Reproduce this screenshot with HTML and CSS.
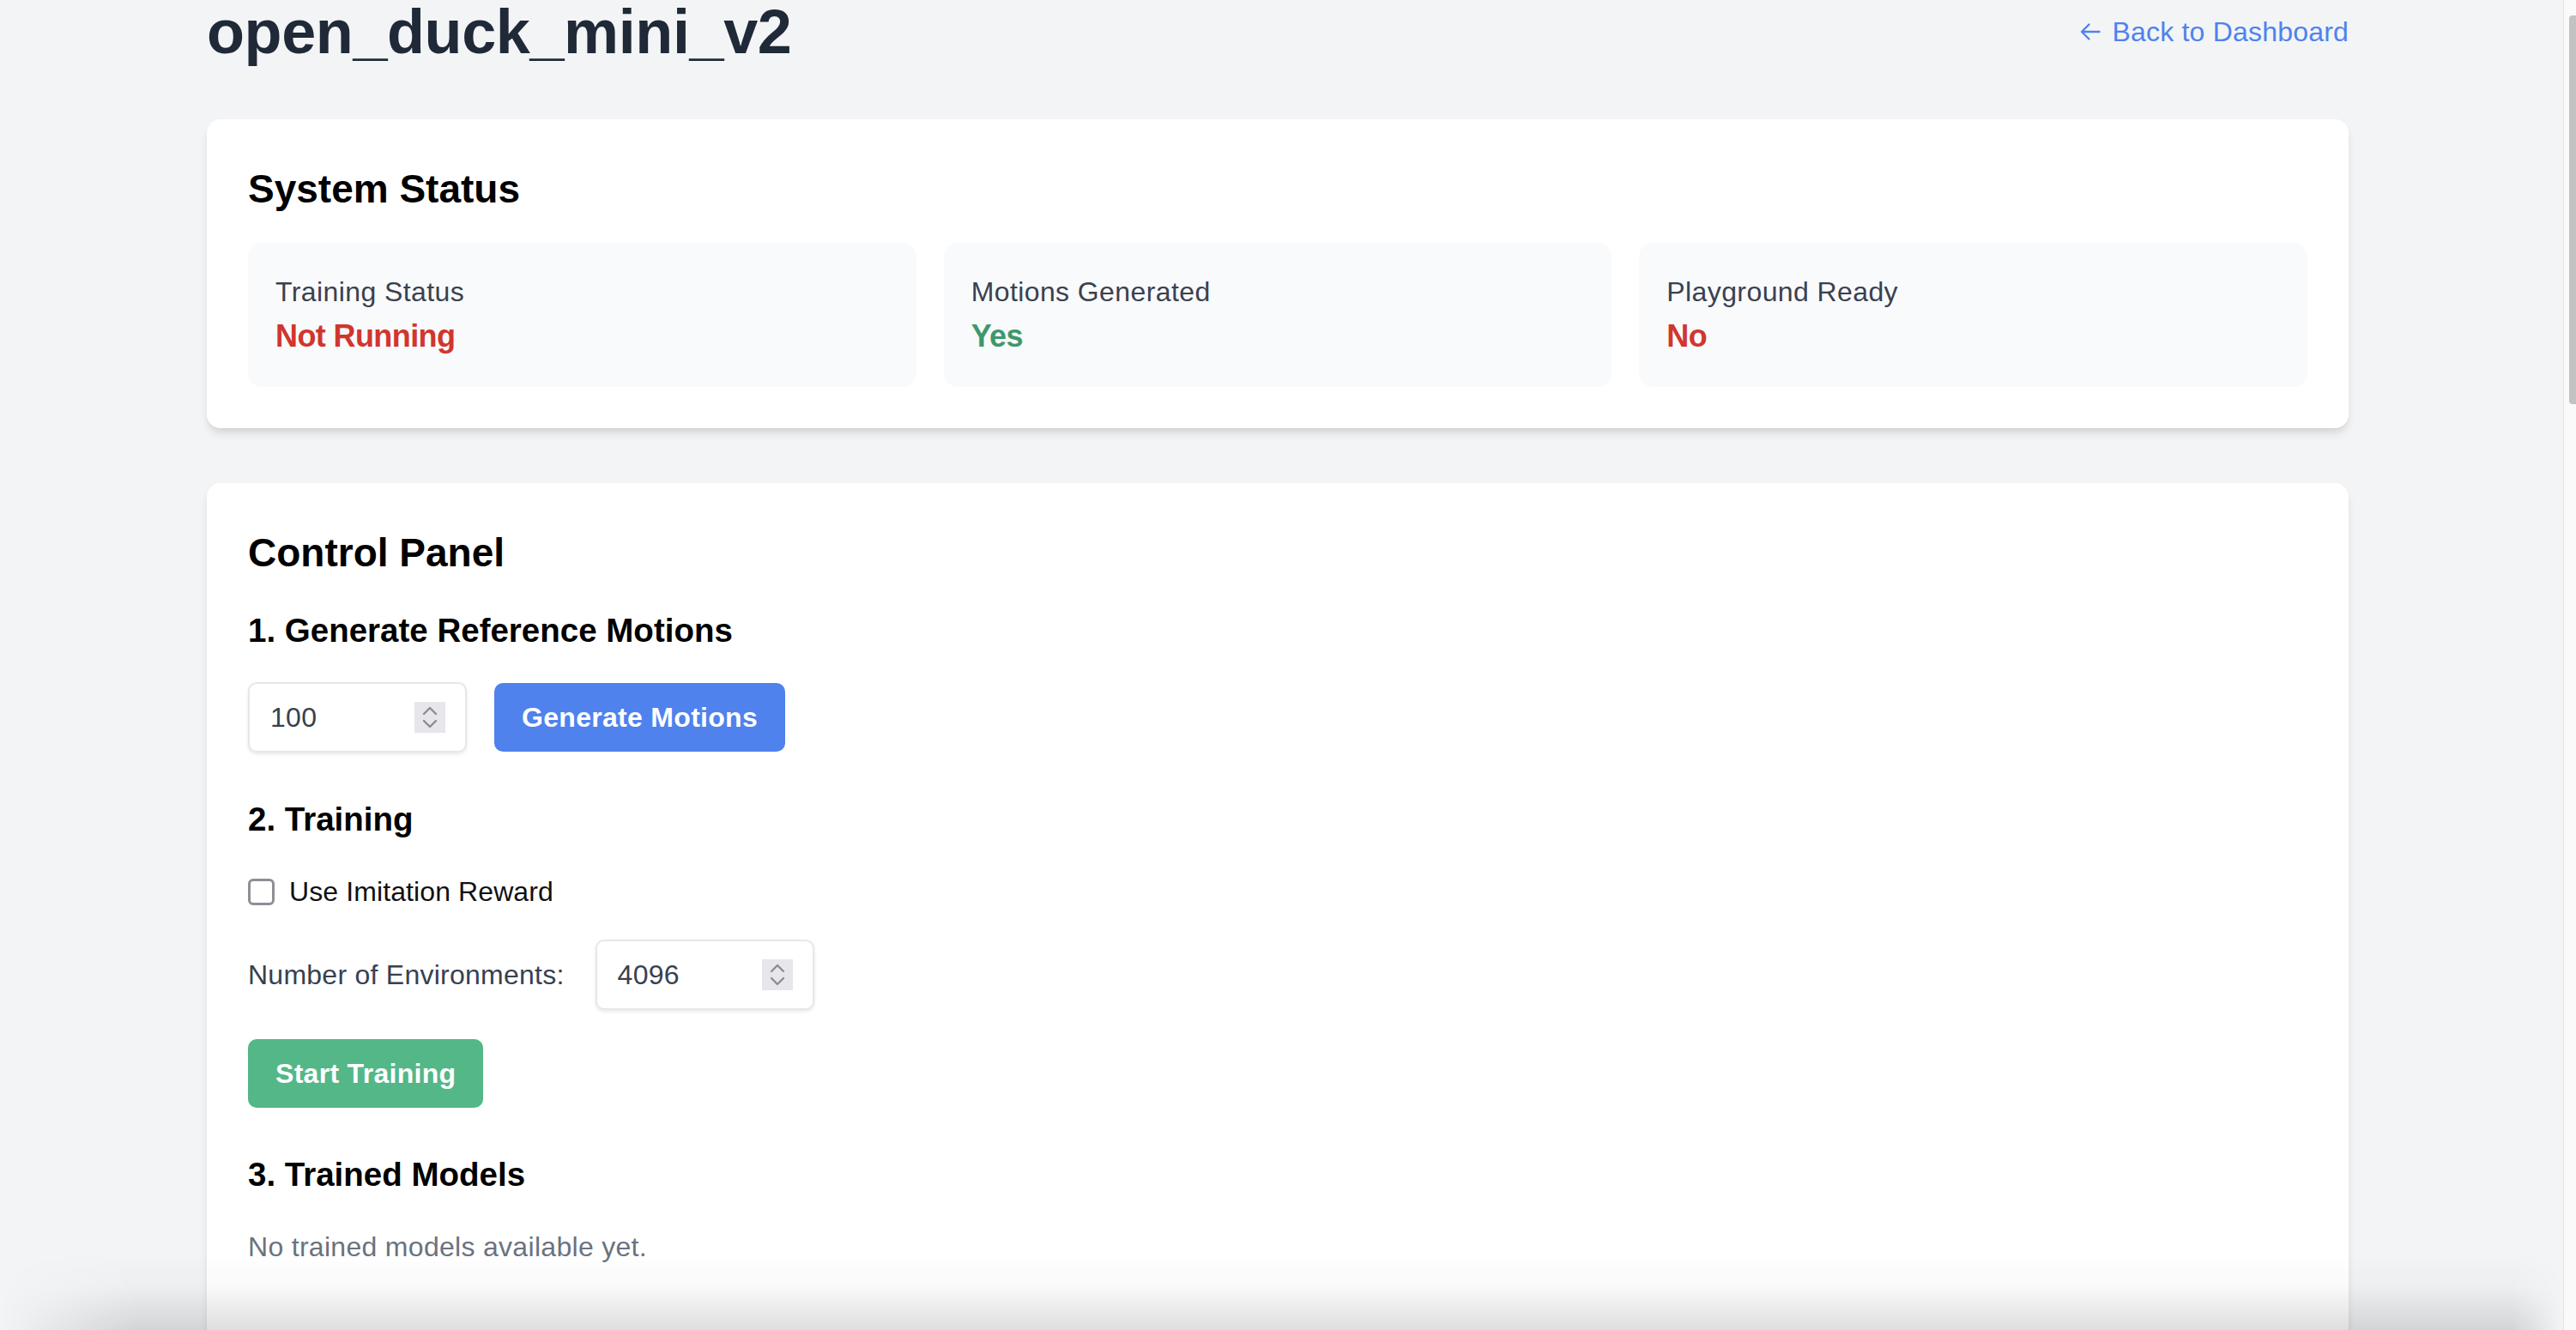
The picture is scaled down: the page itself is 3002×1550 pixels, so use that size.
FILE: index.html
```html
<!DOCTYPE html>
<html lang="en">
<head>
<meta charset="utf-8">
<title>open_duck_mini_v2</title>
<link rel="stylesheet" href="styles.css">
</head>
<body>
<div class="screen">
  <main class="viewport">
    <div class="container">
      <header class="page-header">
        <h1 class="page-title">open_duck_mini_v2</h1>
        <a class="back-link" href="#">
          <svg class="back-icon" viewBox="0 0 24 22" width="24" height="22" aria-hidden="true"><path d="M22.5 11H2.5M10.5 2.5L2 11l8.5 8.5" fill="none" stroke="currentColor" stroke-width="2.4" stroke-linecap="round" stroke-linejoin="round"/></svg>
          <span>Back to Dashboard</span>
        </a>
      </header>

      <section class="card">
        <h2 class="card-title">System Status</h2>
        <div class="status-grid">
          <div class="status-box">
            <p class="status-label">Training Status</p>
            <p class="status-value is-bad">Not Running</p>
          </div>
          <div class="status-box">
            <p class="status-label">Motions Generated</p>
            <p class="status-value is-good">Yes</p>
          </div>
          <div class="status-box">
            <p class="status-label">Playground Ready</p>
            <p class="status-value is-bad">No</p>
          </div>
        </div>
      </section>

      <section class="card">
        <h2 class="card-title">Control Panel</h2>

        <div class="step">
          <h3 class="step-title">1. Generate Reference Motions</h3>
          <div class="row">
            <div class="num-field">
              <input class="num-input" type="text" value="100">
              <span class="spinner"><svg viewBox="0 0 36 36" width="36" height="36" aria-hidden="true"><path d="M11 14l7-7 7 7M11 22l7 7 7-7" fill="none" stroke="#8c8c94" stroke-width="2.4" stroke-linecap="round" stroke-linejoin="round"/></svg></span>
            </div>
            <button class="btn btn-blue" type="button">Generate Motions</button>
          </div>
        </div>

        <div class="step">
          <h3 class="step-title">2. Training</h3>
          <label class="check-row"><input class="check" type="checkbox"><span>Use Imitation Reward</span></label>
          <div class="row env-row">
            <span class="field-label">Number of Environments:</span>
            <div class="num-field">
              <input class="num-input" type="text" value="4096">
              <span class="spinner"><svg viewBox="0 0 36 36" width="36" height="36" aria-hidden="true"><path d="M11 14l7-7 7 7M11 22l7 7 7-7" fill="none" stroke="#8c8c94" stroke-width="2.4" stroke-linecap="round" stroke-linejoin="round"/></svg></span>
            </div>
          </div>
          <button class="btn btn-green" type="button">Start Training</button>
        </div>

        <div class="step">
          <h3 class="step-title">3. Trained Models</h3>
          <p class="muted">No trained models available yet.</p>
        </div>
      </section>
    </div>
  </main>
  <div class="scrollbar"><div class="thumb"></div></div>
</div>
<div class="bottom-shade"></div>
</body>
</html>
```

FILE: styles.css
```css
html, body {
  margin: 0;
  height: 1550px;
  overflow: hidden;
}

body {
  font-family: "Liberation Sans", Arial, sans-serif;
  background: #f3f4f6;
  color: #111827;
}

.screen {
  display: flex;
  height: 1550px;
}

.viewport {
  flex: 1;
  min-width: 0;
  overflow: hidden;
}

.container {
  width: 2496px;
  margin: 1px 0 0 241px;
}

/* header */
.page-header {
  display: flex;
  justify-content: space-between;
  align-items: center;
  height: 72px;
  margin-bottom: 66px;
}

.page-title {
  margin: 0;
  font-size: 72px;
  line-height: 72px;
  font-weight: 700;
  letter-spacing: -0.4px;
  color: #1f2937;
}

.back-link {
  display: flex;
  align-items: center;
  gap: 13px;
  color: #4f82ed;
  text-decoration: none;
  font-size: 32px;
  line-height: 48px;
  letter-spacing: 0.2px;
}

.back-icon {
  display: block;
}

/* cards */
.card {
  background: #ffffff;
  border-radius: 16px;
  padding: 49px 48px 48px;
  margin-bottom: 64px;
  box-shadow: 0 8px 12px -2px rgba(0, 0, 0, 0.1), 0 4px 8px -4px rgba(0, 0, 0, 0.1);
}

.card-title {
  margin: 0 0 31px;
  font-size: 46px;
  line-height: 64px;
  font-weight: 700;
  color: #000000;
}

.status-grid {
  display: grid;
  grid-template-columns: repeat(3, 1fr);
  gap: 32px;
}

.status-box {
  background: #f9fafb;
  border-radius: 16px;
  padding: 33px 32px 31px;
}

.status-label {
  margin: 0;
  font-size: 32px;
  line-height: 48px;
  letter-spacing: 0.4px;
  color: #3a4150;
}

.status-value {
  margin: 0;
  font-size: 36px;
  line-height: 56px;
  font-weight: 700;
  letter-spacing: -0.6px;
}

.is-bad { color: #d0362e; }
.is-good { color: #3d996b; }

/* control panel */
.step {
  margin-bottom: 50px;
}

.step-title {
  margin: 0 0 32px;
  font-size: 38.5px;
  line-height: 56px;
  font-weight: 700;
  color: #000000;
}

.row {
  display: flex;
  align-items: center;
  gap: 32px;
}

.num-field {
  display: flex;
  align-items: center;
  box-sizing: border-box;
  width: 255px;
  height: 82px;
  padding: 0 23px 0 24px;
  background: #ffffff;
  border: 2px solid #e6e7eb;
  border-radius: 10px;
  box-shadow: 0 2px 4px rgba(0, 0, 0, 0.09);
}

.num-input {
  flex: 1;
  min-width: 0;
  border: 0;
  outline: 0;
  padding: 0;
  background: transparent;
  font-family: "Liberation Sans", Arial, sans-serif;
  font-size: 32px;
  letter-spacing: 0.3px;
  color: #374151;
}

.spinner {
  display: block;
  width: 36px;
  height: 36px;
  background: #e6e6eb;
}

.spinner svg {
  display: block;
}

.btn {
  height: 80px;
  padding: 0 32px;
  border: 0;
  border-radius: 10px;
  font-family: "Liberation Sans", Arial, sans-serif;
  font-size: 32px;
  font-weight: 700;
  letter-spacing: 0.3px;
  color: #ffffff;
}

.btn-blue { background: #4f82ed; }
.btn-green { background: #54b788; }

.check-row {
  display: flex;
  align-items: center;
  gap: 17px;
  margin-bottom: 32px;
  font-size: 32px;
  line-height: 48px;
  letter-spacing: 0.1px;
  color: #111111;
}

.check {
  appearance: none;
  -webkit-appearance: none;
  box-sizing: border-box;
  width: 31px;
  height: 31px;
  margin: 0;
  background: #ffffff;
  border: 3px solid #8e8e96;
  border-radius: 6px;
}

.env-row {
  gap: 36px;
  margin-bottom: 34px;
}

.field-label {
  font-size: 32px;
  line-height: 48px;
  letter-spacing: 0.25px;
  color: #374151;
}

.muted {
  margin: 0;
  font-size: 32px;
  line-height: 48px;
  letter-spacing: 0.3px;
  color: #6b7280;
}

/* fake scrollbar */
.scrollbar {
  flex: 0 0 15px;
  box-sizing: border-box;
  border-left: 1px solid #e3e3e3;
  background: #fafafa;
  padding-top: 18px;
  display: flex;
  justify-content: flex-end;
  align-items: flex-start;
}

.thumb {
  width: 8px;
  height: 453px;
  background: #c2c2c2;
  border-radius: 4px 0 0 4px;
}

/* window edge shadow at the bottom */
.bottom-shade {
  position: fixed;
  left: 0;
  bottom: 0;
  width: 2987px;
  height: 90px;
  pointer-events: none;
  background: linear-gradient(to bottom, rgba(0, 0, 0, 0) 0%, rgba(0, 0, 0, 0.025) 45%, rgba(0, 0, 0, 0.13) 100%);
  -webkit-mask-image: linear-gradient(to right, transparent 0, #000 160px, #000 calc(100% - 60px), transparent 100%);
  mask-image: linear-gradient(to right, transparent 0, #000 160px, #000 calc(100% - 60px), transparent 100%);
}
```
